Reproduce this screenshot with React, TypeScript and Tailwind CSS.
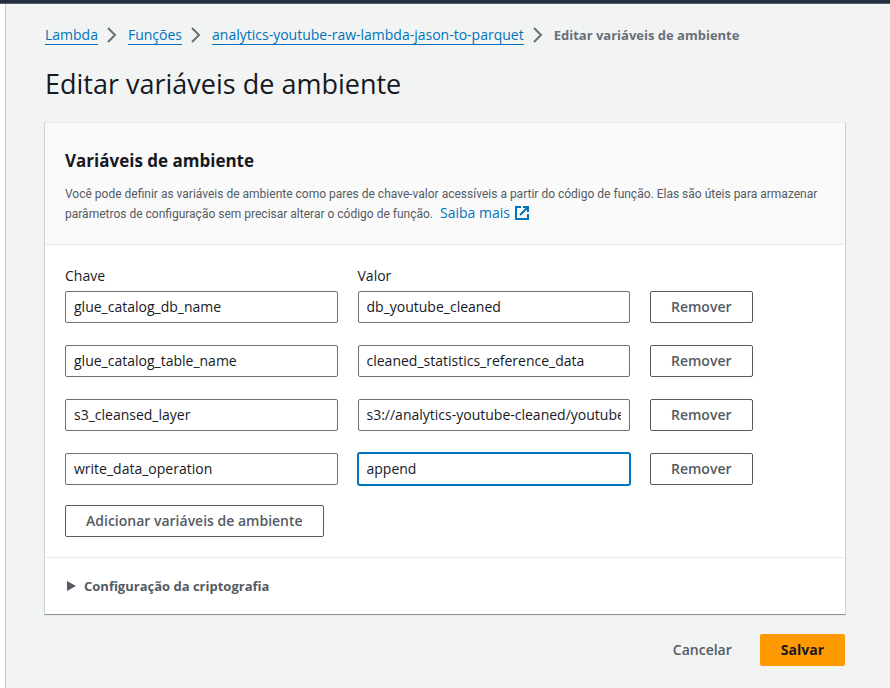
import { useState } from "react";

const initialVariables = [
  { key: "glue_catalog_db_name", value: "db_youtube_cleaned" },
  { key: "glue_catalog_table_name", value: "cleaned_statistics_reference_data" },
  { key: "s3_cleansed_layer", value: "s3://analytics-youtube-cleaned/youtube/" },
  { key: "write_data_operation", value: "append" },
];

const inputClass =
  "h-8 w-full rounded-xs border border-[#687078] bg-white px-2 pb-0.5 text-sm text-[#16191f] outline-none focus:border-[#0073bb] focus:ring-1 focus:ring-[#0073bb]";
const buttonClass =
  "h-8 cursor-pointer rounded-xs border border-[#545b64] bg-white px-5 text-sm font-semibold text-[#545b64]";

function Separator() {
  return (
    <svg className="mr-2 ml-1.5 size-4 shrink-0" viewBox="0 0 16 16" fill="none" stroke="#687078" strokeWidth="2" aria-hidden="true">
      <path d="M4 1l7 7-7 7" />
    </svg>
  );
}

function Crumb({ children }: { children: string }) {
  return (
    <li className="flex items-center">
      <a href="#" className="border-b border-[#0073bb] leading-[18px] text-[#0073bb]">
        {children}
      </a>
      <Separator />
    </li>
  );
}

export default function App() {
  const [variables, setVariables] = useState(initialVariables);

  const update = (index: number, field: "key" | "value", text: string) =>
    setVariables(variables.map((v, i) => (i === index ? { ...v, [field]: text } : v)));

  return (
    <div className="flex min-h-screen flex-col bg-white font-['Open_Sans','Noto_Sans',sans-serif] text-sm text-[#16191f]">
      <header className="h-1 border-b border-[#545b64] bg-[#232f3e]" />
      <main className="ml-[5px] flex-1 border-l border-[#c5caca] bg-[#f2f3f3] pt-5 pr-11 pb-5 pl-[38px]">
        <nav aria-label="Trilha" className="pl-px">
          <ol className="flex items-center leading-[22px]">
            <Crumb>Lambda</Crumb>
            <Crumb>Funções</Crumb>
            <Crumb>analytics-youtube-raw-lambda-jason-to-parquet</Crumb>
            <li className="text-[13px] font-bold whitespace-nowrap text-[#687078]">Editar variáveis de ambiente</li>
          </ol>
        </nav>
        <h1 className="mt-5 pl-px text-[27px] leading-9">Editar variáveis de ambiente</h1>

        <section className="mt-5 border-x border-b border-x-[#d0d5d5] border-b-[#879596] bg-white shadow-xs">
          <div className="border-t border-b border-[#eaeded] bg-[#fafafa] px-5 pt-[25px] pb-5">
            <h2 className="text-[17px] leading-[26px] font-bold">Variáveis de ambiente</h2>
            <p className="mt-2.5 font-['Roboto','Open_Sans',sans-serif] text-xs leading-5 text-[#545b64]">
              Você pode definir as variáveis de ambiente como pares de chave-valor acessíveis a partir do código de
              função. Elas são úteis para armazenar parâmetros de configuração sem precisar alterar o código de
              função.{" "}
              <a href="#" className="ml-1 font-['Open_Sans','Noto_Sans',sans-serif] text-sm leading-none whitespace-nowrap text-[#0073bb]">
                Saiba mais
                <svg className="ml-1 inline-block size-4 align-[-3px]" viewBox="0 0 16 16" fill="none" stroke="currentColor" strokeWidth="2" aria-hidden="true">
                  <path d="M7 2H2v12h12V9M9 2h5v5M6 10l8-8" />
                </svg>
              </a>
            </p>
          </div>

          <div className="px-5 pt-5 pb-5">
            <div className="grid grid-cols-8 gap-x-5 leading-[22px]">
              <span className="col-span-3">Chave</span>
              <span className="col-span-3">Valor</span>
            </div>
            <div className="mt-1 flex flex-col gap-[22px]">
              {variables.map((variable, i) => (
                <div key={i} className="grid grid-cols-8 gap-x-5">
                  <input
                    aria-label="Chave"
                    className={"col-span-3 " + inputClass}
                    value={variable.key}
                    onChange={(e) => update(i, "key", e.target.value)}
                  />
                  <input
                    aria-label="Valor"
                    autoFocus={i === 3}
                    className={"col-span-3 caret-transparent " + inputClass}
                    value={variable.value}
                    onChange={(e) => update(i, "value", e.target.value)}
                  />
                  <div className="col-span-2">
                    <button
                      type="button"
                      className={buttonClass}
                      onClick={() => setVariables(variables.filter((_, j) => j !== i))}
                    >
                      Remover
                    </button>
                  </div>
                </div>
              ))}
            </div>
            <button
              type="button"
              className={"mt-5 " + buttonClass}
              onClick={() => setVariables([...variables, { key: "", value: "" }])}
            >
              Adicionar variáveis de ambiente
            </button>
          </div>

          <div className="border-t border-[#eaeded] px-5 py-[17px]">
            <button type="button" className="flex cursor-pointer items-center text-[13px] leading-[22px] font-bold text-[#545b64]">
              <svg className="mr-2 ml-0.5 h-[10px] w-[9px]" viewBox="0 0 9 10" fill="#545b64" aria-hidden="true">
                <path d="M0 0l9 5-9 5z" />
              </svg>
              Configuração da criptografia
            </button>
          </div>
        </section>

        <div className="mt-[19px] flex justify-end gap-2 pr-px">
          <button type="button" className="h-8 cursor-pointer px-5 font-semibold text-[#545b64]">
            Cancelar
          </button>
          <button type="button" className="h-8 cursor-pointer rounded-xs bg-[#ff9900] px-[21px] font-bold text-[#16191f]">
            Salvar
          </button>
        </div>
      </main>
    </div>
  );
}
